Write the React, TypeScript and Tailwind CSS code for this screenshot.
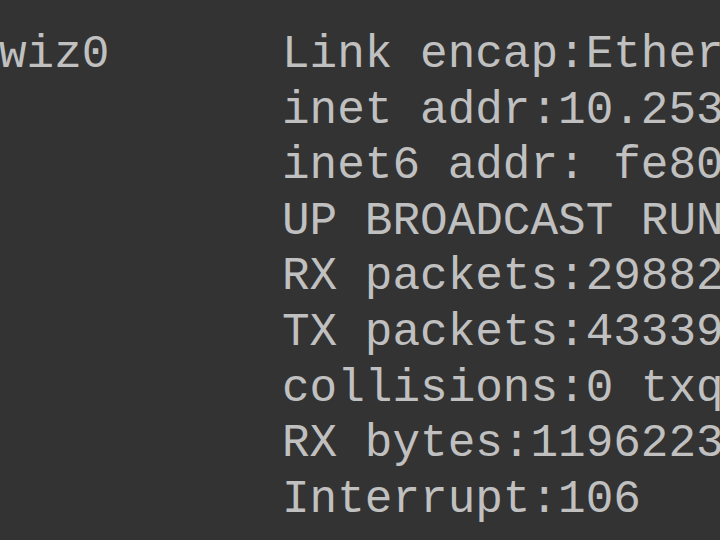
export default function App() {
  const lines = [
    "Link encap:Ethernet  HWaddr 00:11:22:33:44:55",
    "inet addr:10.253.1.2  Bcast:10.253.255.255",
    "inet6 addr: fe80::211:22ff:fe33:4455/64",
    "UP BROADCAST RUNNING MULTICAST  MTU:1500",
    "RX packets:29882 errors:0 dropped:0",
    "TX packets:43339 errors:0 dropped:0",
    "collisions:0 txqueuelen:1000",
    "RX bytes:1196223 (1.1 MiB)",
    "Interrupt:106",
  ];
  return (
    <div
      className="w-[720px] h-[540px] overflow-hidden bg-[#333333] text-[#c0c0c0] pt-[28px]"
      style={{ fontFamily: '"Courier New", Courier, "Nimbus Mono PS", "Nimbus Mono L", FreeMono, "Liberation Mono", monospace' }}
    >
      <div className="flex text-[46px] leading-[55.6px] whitespace-pre">
        <div className="w-[283px] shrink-0 -ml-[1px]">wiz0</div>
        <div className="flex flex-col">
          {lines.map((l, i) => (
            <div key={i}>{l}</div>
          ))}
        </div>
      </div>
    </div>
  );
}
